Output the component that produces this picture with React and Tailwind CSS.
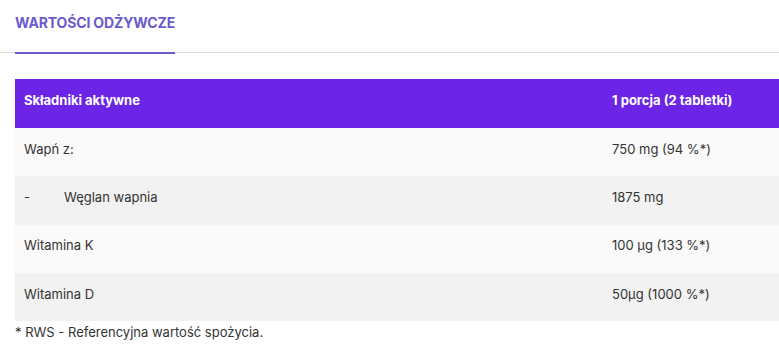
export default function App() {
  const rows = [
    { a: "Wapń z:", b: "750 mg (94 %*)", bg: "bg-[#fafafa]" },
    { a: "Węglan wapnia", b: "1875 mg", bg: "bg-[#f2f2f2]", dash: true },
    { a: "Witamina K", b: "100 µg (133 %*)", bg: "bg-[#fafafa]" },
    { a: "Witamina D", b: "50µg (1000 %*)", bg: "bg-[#f2f2f2]" },
  ];
  return (
    <div className="w-[779px] h-[358px] bg-white overflow-hidden text-[#333] font-['Inter',sans-serif]">
      <div className="border-b border-[#dddddd] h-[53px] pl-[15px] flex">
        <div className="relative h-[53px] flex items-start pt-[14px]">
          <span className="text-[14px] font-bold tracking-[-0.01em] text-[#6a5acd] leading-[18px]">WARTOŚCI ODŻYWCZE</span>
          <div className="absolute left-0 right-0 bottom-[-1px] h-[2px] bg-[#6a5acd]" />
        </div>
      </div>
      <div className="ml-[15px] mt-[26px]">
        <div className="h-[49px] pb-[5px] bg-[#6c24e6] text-white font-bold text-[13px] flex items-center">
          <div className="w-[597px] pl-[9px]">Składniki aktywne</div>
          <div>1 porcja (2 tabletki)</div>
        </div>
        {rows.map((r, i) => (
          <div key={i} className={`h-[48.3px] pb-[5px] ${r.bg} text-[13px] flex items-center`}>
            {r.dash ? (
              <div className="w-[597px] pl-[9px] flex">
                <span className="w-[40px]">-</span>
                <span>{r.a}</span>
              </div>
            ) : (
              <div className="w-[597px] pl-[9px]">{r.a}</div>
            )}
            <div>{r.b}</div>
          </div>
        ))}
      </div>
      <div className="pl-[15px] pt-[2px] text-[13px] leading-[18px]">* RWS - Referencyjna wartość spożycia.</div>
    </div>
  );
}
